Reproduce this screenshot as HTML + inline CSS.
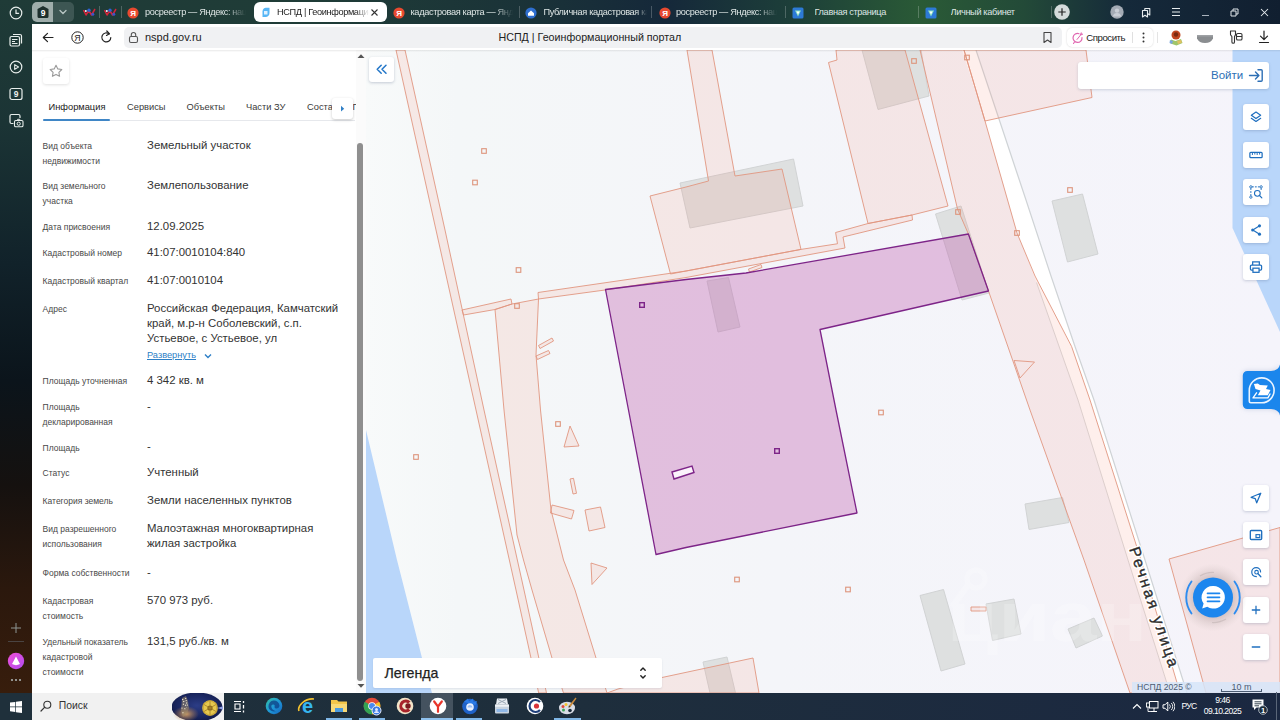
<!DOCTYPE html>
<html lang="ru">
<head>
<meta charset="utf-8">
<title>НСПД | Геоинформационный портал</title>
<style>
*{box-sizing:border-box;margin:0;padding:0}
html,body{width:1280px;height:720px;overflow:hidden;background:#fff;font-family:"Liberation Sans",sans-serif;color:#222}
.abs{position:absolute}
#tabbar{position:absolute;left:0;top:0;width:1280px;height:24px;background:linear-gradient(90deg,#1f3b37 0,#1f3c37 25%,#1a3238 42%,#15283a 52%,#1d3f39 62%,#2a5a36 72%,#234a38 80%,#15293a 88%,#111f30 100%)}
#sidebar{position:absolute;left:0;top:0;width:32px;height:693px;background:linear-gradient(180deg,#1f3b37 0,#1b3435 18%,#11222a 38%,#0b141b 55%,#15110f 70%,#2b180d 85%,#371d0c 100%)}
#addr{position:absolute;left:32px;top:24px;width:1248px;height:26px;background:#fff;border-top-left-radius:7px}
#panel{position:absolute;left:32px;top:50px;width:334px;height:643px;background:#fff;overflow:hidden}
#map{position:absolute;left:366px;top:50px;width:914px;height:643px;background:#f4f5fa;overflow:hidden}
#taskbar{position:absolute;left:0;top:693px;width:1280px;height:27px;background:linear-gradient(90deg,#1f303b 0,#1e2e3c 45%,#1b2841 100%)}
/* tabs */
.tab{position:absolute;top:0;height:24px;line-height:24px;font-size:9.2px;color:#dfe7e6;white-space:nowrap;overflow:hidden;letter-spacing:-0.35px}
.tab.active{background:#fff;color:#222;border-radius:6px;top:2px;height:21px;line-height:21px}
.tsep{position:absolute;top:6px;width:1px;height:12px;background:rgba(255,255,255,.22)}
/* panel */
.lbl{position:absolute;left:10.6px;font-size:8.5px;line-height:15px;color:#484848;white-space:nowrap}
.val{position:absolute;left:115px;font-size:11.4px;line-height:15px;color:#333;white-space:nowrap}
.ptab{position:absolute;top:49.5px;font-size:9.3px;line-height:14px;color:#3a3a3a;white-space:nowrap}
.mbtn{position:absolute;left:877px;width:26px;height:26px;background:#fff;border-radius:3px;box-shadow:0 1px 3px rgba(60,80,120,.25)}
.mbtn svg{position:absolute;left:0;top:0;transform:scale(.9);transform-origin:13px 13px}
</style>
</head>
<body>
<div id="tabbar">
<!-- tab group -->
<div class="abs" style="left:32px;top:2px;width:21px;height:20px;background:#9fadab;border-radius:5px 0 0 5px"></div>
<svg class="abs" style="left:36px;top:5px" width="14" height="14" viewBox="0 0 14 14"><path d="M1.5 4L7 1l5.5 3v7.5a1.5 1.5 0 0 1-1.5 1.5H3a1.5 1.5 0 0 1-1.5-1.5z" fill="#1d2f2d"/><text x="7" y="10.6" font-size="8.5" font-weight="bold" fill="#fff" text-anchor="middle" font-family="Liberation Sans, sans-serif">9</text></svg>
<div class="abs" style="left:53px;top:2px;width:20.5px;height:20px;background:#3d5653;border-radius:0 5px 5px 0"></div>
<svg class="abs" style="left:58px;top:8px" width="10" height="8" viewBox="0 0 10 8"><path d="M2 2.5l3 3 3-3" fill="none" stroke="#b9c6c4" stroke-width="1.3" stroke-linecap="round"/></svg>
<!-- pinned -->
<svg class="abs" style="left:82.5px;top:8px" width="13" height="9" viewBox="0 0 13 9"><path d="M0.5 2l2.5 5 2.8-4.5L8.5 7l3.5-6" fill="none" stroke="#d4243a" stroke-width="1.5" stroke-linejoin="round"/><circle cx="6" cy="2.3" r="1.7" fill="#2f62d3"/><circle cx="9.8" cy="6.3" r="1.5" fill="#3d55c8"/><circle cx="2.8" cy="3" r="1" fill="#f2f4ff"/></svg>
<div class="tsep" style="left:99px"></div>
<svg class="abs" style="left:104px;top:8px" width="13" height="9" viewBox="0 0 13 9"><path d="M0.5 2l2.5 5 2.8-4.5L8.5 7l3.5-6" fill="none" stroke="#d4243a" stroke-width="1.5" stroke-linejoin="round"/><circle cx="6" cy="2.3" r="1.7" fill="#2f62d3"/><circle cx="9.8" cy="6.3" r="1.5" fill="#3d55c8"/><circle cx="2.8" cy="3" r="1" fill="#f2f4ff"/></svg>
<div class="tsep" style="left:120.5px"></div>
<!-- tab 1 -->
<svg class="abs" style="left:127px;top:6.5px" width="12" height="12" viewBox="0 0 12 12"><circle cx="6" cy="6" r="5.6" fill="#e8492f"/><text x="6.2" y="9" font-size="8" font-weight="bold" fill="#fff" text-anchor="middle" font-family="Liberation Sans, sans-serif">Я</text></svg>
<div class="tab" style="left:145px;width:101px;-webkit-mask-image:linear-gradient(90deg,#000 80%,transparent)">росреестр — Яндекс: нашлось</div>
<!-- active tab -->
<div class="tab active" style="left:253.5px;width:133px;height:20px"></div>
<svg class="abs" style="left:261px;top:7px" width="10" height="11" viewBox="0 0 10 11"><path d="M2 2.5a3 3 0 0 1 3-1.8h3.5v5a4 4 0 0 1-4 4.3H1.5V4z" fill="#57b6f5"/><path d="M3 4h3.5v3.5H3z" fill="#dff1ff"/></svg>
<div class="tab" style="left:277px;top:2px;height:21px;line-height:21px;width:92px;color:#222;-webkit-mask-image:linear-gradient(90deg,#000 86%,transparent)">НСПД | Геоинформационный</div>
<svg class="abs" style="left:369.5px;top:8px" width="9" height="9" viewBox="0 0 9 9"><path d="M1.5 1.5l6 6M7.5 1.5l-6 6" stroke="#333" stroke-width="1.1"/></svg>
<!-- tab 3 -->
<svg class="abs" style="left:393px;top:6.5px" width="12" height="12" viewBox="0 0 12 12"><circle cx="6" cy="6" r="5.6" fill="#e8492f"/><text x="6.2" y="9" font-size="8" font-weight="bold" fill="#fff" text-anchor="middle" font-family="Liberation Sans, sans-serif">Я</text></svg>
<div class="tab" style="left:410.5px;width:102px;-webkit-mask-image:linear-gradient(90deg,#000 82%,transparent)">кадастровая карта — Яндекс</div>
<div class="tsep" style="left:518.5px"></div>
<!-- tab 4 -->
<svg class="abs" style="left:525px;top:6.5px" width="12" height="12" viewBox="0 0 12 12"><circle cx="6" cy="6" r="5.6" fill="#2f6fd0"/><path d="M3 6.2L6 3.5l3 2.7v2.6H3z" fill="#fff"/></svg>
<div class="tab" style="left:543.5px;width:103px;-webkit-mask-image:linear-gradient(90deg,#000 90%,transparent)">Публичная кадастровая карта</div>
<div class="tsep" style="left:651px"></div>
<!-- tab 5 -->
<svg class="abs" style="left:658.5px;top:6.5px" width="12" height="12" viewBox="0 0 12 12"><circle cx="6" cy="6" r="5.6" fill="#e8492f"/><text x="6.2" y="9" font-size="8" font-weight="bold" fill="#fff" text-anchor="middle" font-family="Liberation Sans, sans-serif">Я</text></svg>
<div class="tab" style="left:676px;width:101px;-webkit-mask-image:linear-gradient(90deg,#000 80%,transparent)">росреестр — Яндекс: нашлось</div>
<div class="tsep" style="left:784.5px"></div>
<!-- tab 6 -->
<svg class="abs" style="left:791.5px;top:6.5px" width="12" height="12" viewBox="0 0 12 12"><rect x="0.5" y="0.5" width="11" height="11" rx="1.5" fill="#2d7ad6"/><path d="M3 3.5h6L6 9.5z" fill="#8fe3c0"/><path d="M4.5 4.5h3L6 7.5z" fill="#fff"/></svg>
<div class="tab" style="left:814.5px;width:100px">Главная страница</div>
<div class="tsep" style="left:917.5px"></div>
<!-- tab 7 -->
<svg class="abs" style="left:924.5px;top:6.5px" width="12" height="12" viewBox="0 0 12 12"><rect x="0.5" y="0.5" width="11" height="11" rx="1.5" fill="#2d7ad6"/><path d="M3 3.5h6L6 9.5z" fill="#8fe3c0"/><path d="M4.5 4.5h3L6 7.5z" fill="#fff"/></svg>
<div class="tab" style="left:950.5px;width:90px">Личный кабинет</div>
<div class="tsep" style="left:1050.5px"></div>
<!-- new tab -->
<svg class="abs" style="left:1054px;top:4px" width="16" height="16" viewBox="0 0 16 16"><circle cx="8" cy="8" r="7.8" fill="#d5dbdb"/><path d="M8 4.3v7.4M4.3 8h7.4" stroke="#222" stroke-width="1.2"/></svg>
<!-- profile -->
<svg class="abs" style="left:1110px;top:5px" width="14" height="14" viewBox="0 0 14 14"><circle cx="7" cy="7" r="6.7" fill="#a4abb5"/><circle cx="7" cy="5.6" r="2.2" fill="#c9ced6"/><path d="M2.8 11.5a4.3 4.3 0 0 1 8.4 0z" fill="#c9ced6"/></svg>
<svg class="abs" style="left:1141px;top:7px" width="11" height="11" viewBox="0 0 11 11"><path d="M1.5 3.5h5v6.5L4 8.3 1.5 10z" fill="none" stroke="#e6ebee" stroke-width="1.1" stroke-linejoin="round"/><path d="M3.8 3.3V1.5h5V8L7 6.8" fill="none" stroke="#e6ebee" stroke-width="1.1" stroke-linejoin="round"/></svg>
<svg class="abs" style="left:1171px;top:7px" width="10" height="10" viewBox="0 0 10 10"><path d="M1 1.5h8M1 5h8M1 8.5h8" stroke="#e6ebee" stroke-width="1.1"/></svg>
<div class="abs" style="left:1202px;top:14.5px;width:6.5px;height:1px;background:#aab3bd"></div>
<svg class="abs" style="left:1230px;top:8px" width="9" height="9" viewBox="0 0 9 9"><path d="M1 3h5v5H1z" fill="none" stroke="#dfe5ea" stroke-width="1"/><path d="M3 3V1h5v5H6" fill="none" stroke="#dfe5ea" stroke-width="1"/></svg>
<svg class="abs" style="left:1260px;top:8px" width="9" height="9" viewBox="0 0 9 9"><path d="M1 1l7 7M8 1L1 8" stroke="#e6ebee" stroke-width="1.05"/></svg>
</div>
<div id="sidebar">
<svg class="abs" style="left:9px;top:6px" width="14" height="14" viewBox="0 0 14 14"><circle cx="7" cy="7" r="5.8" fill="none" stroke="#e8eeec" stroke-width="1.2"/><path d="M7 3.8V7.3h2.6" fill="none" stroke="#e8eeec" stroke-width="1.2" stroke-linecap="round"/></svg>
<svg class="abs" style="left:9px;top:33px" width="14" height="14" viewBox="0 0 14 14"><rect x="1" y="3.5" width="9.5" height="9.5" rx="1.5" fill="none" stroke="#e8eeec" stroke-width="1.2"/><path d="M4 1.5h7a1.5 1.5 0 0 1 1.5 1.5v7.5" fill="none" stroke="#e8eeec" stroke-width="1.2"/><path d="M3 6.5h5.5M3 8.5h3M3 10.5h5.5" stroke="#e8eeec" stroke-width="1"/></svg>
<svg class="abs" style="left:9px;top:60px" width="14" height="14" viewBox="0 0 14 14"><circle cx="7" cy="7" r="5.8" fill="none" stroke="#e8eeec" stroke-width="1.2"/><path d="M5.7 4.6l3.8 2.4-3.8 2.4z" fill="none" stroke="#e8eeec" stroke-width="1.1" stroke-linejoin="round"/></svg>
<svg class="abs" style="left:9px;top:87px" width="14" height="14" viewBox="0 0 14 14"><rect x="1" y="1.5" width="12" height="11" rx="2" fill="none" stroke="#e8eeec" stroke-width="1.2"/><text x="7" y="10.3" font-size="8.5" font-weight="bold" fill="#e8eeec" text-anchor="middle" font-family="Liberation Sans, sans-serif">9</text></svg>
<svg class="abs" style="left:9px;top:113px" width="15" height="15" viewBox="0 0 15 15"><path d="M4.5 10.5H2.5a1.5 1.5 0 0 1-1.5-1.5V3a1.5 1.5 0 0 1 1.5-1.5h7A1.5 1.5 0 0 1 11 3v2" fill="none" stroke="#e8eeec" stroke-width="1.2"/><rect x="5.5" y="7.5" width="8.5" height="6.3" rx="1.3" fill="none" stroke="#e8eeec" stroke-width="1.1"/><circle cx="9.7" cy="10.7" r="1.6" fill="none" stroke="#e8eeec" stroke-width="1"/><path d="M8 7.5l.7-1.2h2l.7 1.2" fill="none" stroke="#e8eeec" stroke-width="1"/></svg>
<!-- bottom -->
<svg class="abs" style="left:10px;top:622px" width="12" height="12" viewBox="0 0 12 12"><path d="M6 1v10M1 6h10" stroke="#8e9694" stroke-width="1"/></svg>
<div class="abs" style="left:8px;top:641px;width:16px;height:1px;background:#4a4442"></div>
<svg class="abs" style="left:7px;top:652px" width="18" height="18" viewBox="0 0 18 18"><defs><linearGradient id="alg" x1="0" y1="0" x2="1" y2="1"><stop offset="0" stop-color="#f04fd8"/><stop offset="1" stop-color="#b04cf0"/></linearGradient></defs><circle cx="9" cy="9" r="8.2" fill="url(#alg)"/><path d="M9 4.5l4 7.5a8 8 0 0 1-8 0z" fill="#fff"/></svg>
<svg class="abs" style="left:10px;top:678px" width="12" height="4" viewBox="0 0 12 4"><circle cx="2" cy="2" r="1.1" fill="#aab0ae"/><circle cx="6" cy="2" r="1.1" fill="#aab0ae"/><circle cx="10" cy="2" r="1.1" fill="#aab0ae"/></svg>
</div>
<div id="addr">
<svg class="abs" style="left:10px;top:8px" width="12" height="11" viewBox="0 0 12 11"><path d="M11 5.5H1.5M5.5 1.3L1.3 5.5l4.2 4.2" fill="none" stroke="#222" stroke-width="1.2" stroke-linecap="round" stroke-linejoin="round"/></svg>
<svg class="abs" style="left:38.5px;top:7px" width="13" height="13" viewBox="0 0 13 13"><circle cx="6.5" cy="6.5" r="5.7" fill="none" stroke="#222" stroke-width="1"/><text x="6.5" y="9.6" font-size="8.8" fill="#222" text-anchor="middle" font-family="Liberation Sans, sans-serif">Я</text></svg>
<svg class="abs" style="left:68px;top:6px" width="13" height="14" viewBox="0 0 13 14"><path d="M10.8 7.5a4.5 4.5 0 1 1-1.7-3.6" fill="none" stroke="#222" stroke-width="1.2" stroke-linecap="round"/><path d="M6.8 1l2.6 2.7-2.9 1.7" fill="none" stroke="#222" stroke-width="1.2" stroke-linecap="round" stroke-linejoin="round"/></svg>
<div class="abs" style="left:91.5px;top:3px;width:938.5px;height:21px;background:#f0f1f3;border-radius:5px"></div>
<svg class="abs" style="left:96px;top:7px" width="11" height="13" viewBox="0 0 11 13"><rect x="1.5" y="5.5" width="8" height="6" rx="1.5" fill="none" stroke="#555" stroke-width="1.1"/><path d="M3.3 5.5V3.7a2.2 2.2 0 0 1 4.4 0v1.8" fill="none" stroke="#555" stroke-width="1.1"/></svg>
<div class="abs" style="left:113px;top:6px;font-size:11px;line-height:14px;color:#222;white-space:nowrap">nspd.gov.ru</div>
<div class="abs" style="left:466.5px;top:6px;font-size:10.7px;line-height:14px;color:#222;white-space:nowrap">НСПД | Геоинформационный портал</div>
<svg class="abs" style="left:1010px;top:7px" width="11" height="13" viewBox="0 0 11 13"><path d="M2 1.5h7v10L5.5 9 2 11.5z" fill="none" stroke="#444" stroke-width="1.1" stroke-linejoin="round"/></svg>
<div class="abs" style="left:1034.5px;top:4px;width:86.5px;height:19px;background:#fff;border-radius:5px;box-shadow:0 0 2px rgba(0,0,0,.18)"></div>
<svg class="abs" style="left:1040px;top:7.5px" width="12" height="12" viewBox="0 0 12 12"><path d="M10 5.5a4.5 4.5 0 1 1-3-3.8" fill="none" stroke="#e066b0" stroke-width="1.2" stroke-linecap="round"/><path d="M5 7.5l4-5M9.5 1l1 1.5-1.8.3z" fill="none" stroke="#e066b0" stroke-width="1" stroke-linecap="round"/><path d="M2.5 10l-1 1.5" stroke="#e066b0" stroke-width="1.1" stroke-linecap="round"/></svg>
<div class="abs" style="left:1054.3px;top:6.5px;font-size:9.6px;line-height:13px;color:#222;white-space:nowrap;letter-spacing:-0.45px">Спросить</div>
<div class="abs" style="left:1100px;top:8px;width:1px;height:11px;background:#e0e0e0"></div>
<svg class="abs" style="left:1109.5px;top:8px" width="3" height="11" viewBox="0 0 3 11"><circle cx="1.5" cy="1.5" r="1" fill="#333"/><circle cx="1.5" cy="5.5" r="1" fill="#333"/><circle cx="1.5" cy="9.5" r="1" fill="#333"/></svg>
<div class="abs" style="left:1124.5px;top:8px;width:1px;height:11px;background:#e4e4e4"></div>
<svg class="abs" style="left:1136px;top:5px" width="17" height="17" viewBox="0 0 17 17"><circle cx="8" cy="6" r="4.5" fill="#c0451f"/><circle cx="8" cy="5.5" r="2.2" fill="#7a2a10"/><path d="M3 10.5l4.5 1.5L13 10l1.5 4-6 2.5-6-2z" fill="#9fc56a"/><path d="M2 11l3 1-1 3-2.5-1z" fill="#7aa6e0"/><path d="M9 12l4-1 1 2.5-4 1.5z" fill="#e0c060"/></svg>
<svg class="abs" style="left:1164px;top:10px" width="18" height="10" viewBox="0 0 18 10"><path d="M1 1h16v3.5c-1.5 3-4 4.5-8 4.5S2.5 7.5 1 4.5z" fill="#8a8d90"/><path d="M1 1h16v1.5H1z" fill="#9ea1a4"/></svg>
<svg class="abs" style="left:1196px;top:5px" width="16" height="16" viewBox="0 0 16 16"><path d="M2.5 2h5v3.5c0 1-1 1.2-1 2.2V13a1.3 1.3 0 0 1-2.6 0V7.7c0-1-1.4-1.2-1.4-2.2z" fill="none" stroke="#333" stroke-width="1.1" stroke-linejoin="round"/><rect x="8.5" y="4.5" width="5.5" height="6.5" rx="1.3" fill="none" stroke="#333" stroke-width="1.1"/><path d="M8.5 7.5h5.5" stroke="#333" stroke-width="1"/></svg>
<svg class="abs" style="left:1226px;top:6px" width="12" height="14" viewBox="0 0 12 14"><path d="M6 1v8.5M2.5 6.2L6 9.7l3.5-3.5M1.5 12.5h9" fill="none" stroke="#222" stroke-width="1.2" stroke-linecap="round" stroke-linejoin="round"/></svg>
</div>

<div id="panel">
<div class="abs" style="left:11px;top:8px;width:26px;height:26px;border-radius:3px;box-shadow:0 1px 3px rgba(0,0,0,.12);background:#fff">
<svg width="26" height="26" viewBox="0 0 26 26"><path d="M13 7.2l1.8 3.7 4 .6-2.9 2.8.7 4-3.6-1.9-3.6 1.9.7-4-2.9-2.8 4-.6z" fill="none" stroke="#9a9a9a" stroke-width="1.1" stroke-linejoin="round"/></svg></div>
<div class="ptab" style="left:16.5px;color:#222">Информация</div>
<div class="ptab" style="left:95px">Сервисы</div>
<div class="ptab" style="left:154.5px">Объекты</div>
<div class="ptab" style="left:214px">Части ЗУ</div>
<div class="ptab" style="left:275px">Состав</div>
<div class="ptab" style="left:320.5px">Г</div>
<div class="abs" style="left:11px;top:70px;width:312px;height:1px;background:#e6e8ec"></div>
<div class="abs" style="left:11px;top:69px;width:67px;height:2px;background:#3f86c6;border-radius:1px"></div>
<div class="abs" style="left:300px;top:48px;width:21px;height:21px;background:#fff;border-radius:3px;box-shadow:0 1px 3px rgba(0,0,0,.22)"><svg width="21" height="21" viewBox="0 0 21 21"><path d="M9 7.8l3.2 2.9L9 13.6z" fill="#2f7fc6"/></svg></div>

<div class="abs" style="left:0;top:0.7px;width:324px;height:640px">
<div class="lbl" style="top:88px">Вид объекта<br>недвижимости</div><div class="val" style="top:87px">Земельный участок</div>
<div class="lbl" style="top:128px">Вид земельного<br>участка</div><div class="val" style="top:127px">Землепользование</div>
<div class="lbl" style="top:169px">Дата присвоения</div><div class="val" style="top:168px">12.09.2025</div>
<div class="lbl" style="top:195px">Кадастровый номер</div><div class="val" style="top:194px">41:07:0010104:840</div>
<div class="lbl" style="top:223px">Кадастровый квартал</div><div class="val" style="top:222px">41:07:0010104</div>
<div class="lbl" style="top:251px">Адрес</div><div class="val" style="top:250px">Российская Федерация, Камчатский<br>край, м.р-н Соболевский, с.п.<br>Устьевое, с Устьевое, ул</div>
<div class="abs" style="left:115px;top:297px;font-size:9.25px;line-height:15px;color:#2d7fc6;text-decoration:underline;white-space:nowrap">Развернуть</div>
<svg class="abs" style="left:171px;top:300px" width="10" height="10" viewBox="0 0 10 10"><path d="M2 3.5l3 3 3-3" fill="none" stroke="#2d7fc6" stroke-width="1.4"/></svg>
<div class="lbl" style="top:323px">Площадь уточненная</div><div class="val" style="top:322px">4 342 кв. м</div>
<div class="lbl" style="top:349px">Площадь<br>декларированная</div><div class="val" style="top:348px">-</div>
<div class="lbl" style="top:390px">Площадь</div><div class="val" style="top:388px">-</div>
<div class="lbl" style="top:415px">Статус</div><div class="val" style="top:414px">Учтенный</div>
<div class="lbl" style="top:443px">Категория земель</div><div class="val" style="top:442px">Земли населенных пунктов</div>
<div class="lbl" style="top:471px">Вид разрешенного<br>использования</div><div class="val" style="top:470px">Малоэтажная многоквартирная<br>жилая застройка</div>
<div class="lbl" style="top:515px">Форма собственности</div><div class="val" style="top:514px">-</div>
<div class="lbl" style="top:543px">Кадастровая<br>стоимость</div><div class="val" style="top:542px">570 973 руб.</div>
<div class="lbl" style="top:584px">Удельный показатель<br>кадастровой<br>стоимости</div><div class="val" style="top:583px">131,5 руб./кв. м</div>
</div>
<!-- scrollbar -->
<div class="abs" style="left:324px;top:0;width:10px;height:642px;background:#fbfbfb"></div>
<svg class="abs" style="left:325px;top:3px" width="8" height="6" viewBox="0 0 8 6"><path d="M0.5 5L4 1.2 7.5 5z" fill="#555"/></svg>
<div class="abs" style="left:325px;top:93px;width:6px;height:538px;background:#8f8f8f;border-radius:3px"></div>
<svg class="abs" style="left:325px;top:633px" width="8" height="6" viewBox="0 0 8 6"><path d="M0.5 1L4 4.8 7.5 1z" fill="#555"/></svg>
</div>

<div id="map">
<svg id="mapsvg" width="914" height="643" viewBox="366 50 914 643" style="position:absolute;left:0;top:0">
<defs>
<linearGradient id="bgg" x1="0" x2="1" y1="0" y2="0"><stop offset="0" stop-color="#f8fafa"/><stop offset="0.1" stop-color="#f4f7f8"/><stop offset="0.45" stop-color="#f4f5f9"/><stop offset="1" stop-color="#f5f4fb"/></linearGradient>
</defs>
<rect x="366" y="50" width="914" height="643" fill="url(#bgg)"/>
<!-- water -->
<polygon points="366,430 397,560 422,658 432,693 366,693" fill="#b9d6fa"/>
<polygon points="1232.5,50 1232.5,228 1280,332 1280,50" fill="#b9d6fa"/>
<!-- base road shoulder (white) with gray edges -->
<polygon points="962,50 985,121 1017,232 1036.5,282.5 1078,400 1128,560 1170,693 1187,693 1145,560 1094,400 1075,346.5 1051,276 1026,200 999,119 976,50" fill="#ffffff"/>
<polyline points="1036.5,282.5 1078,400 1128,560 1170,693" fill="none" stroke="#d9dadb" stroke-width="1"/>
<polyline points="976,50 999,119 1026,200 1051,276 1075,346.5 1094,400 1145,560 1187,693" fill="none" stroke="#cfd3d6" stroke-width="1.2"/>
<!-- gray buildings -->
<g fill="#dee0e0" stroke="#d1d3d4" stroke-width="1">
<polygon points="680,183 793.5,159 803,206 690,228"/>
<polygon points="862,50 921,50 929,96 878,109.5"/>
<polygon points="707,281 728.5,277.5 740,327 718,332"/>
<polygon points="935.5,214 961,206 989,293 962,300"/>
<polygon points="1052,201 1082.5,194 1098,254 1067.5,262"/>
<polygon points="1025,504 1062.5,497.5 1069,522.5 1029,529.5"/>
<polygon points="920,595.5 943.5,589.5 965,664 941,671"/>
<polygon points="986,604 1014,599 1021,634 992.5,640.5"/>
<polygon points="1068,629 1094,618 1102.5,636 1076,648"/>
<polygon points="703,662 727,657 735.5,693 710,693"/>
</g>
<!-- cadastral parcels -->
<g fill="rgba(243,125,98,0.12)" stroke="#e19680" stroke-width="0.9" stroke-linejoin="round">
<polygon points="396,50 436,230 476,410 516,590 538.7,693 546.5,693 524,590 484,410 445,230 405,50"/>
<polygon points="462,310 511,299 512,304 495,309.5 463.5,315"/>
<polygon points="495,309.5 512,304 538.5,299 536,355 540.5,410 551,510 563.5,560 575,590 596,658 607,693 563.5,693 552,658 532,590 523.5,560 517,535 504,410"/>
<polygon points="538,292.5 686,271 801,249.4 837.5,243.75 835.6,232.5 868,223.5 912,215 912.5,220 843,237 845,248 686,277.5 605,290 538.5,299"/>
<polygon points="650,196 686,187 708.5,181 687,50 712,50 735,176 782,169 801,249.4 686,271 670.5,274"/>
<polygon points="836,50 837,60 828.5,62.5 868,223.5 912,215 948,206 905,50"/>
<polygon points="920,50 957.5,209 968.4,234 988.5,291 1030,410 1084,560 1130,693 1180,693 1141,560 1090,400 1071.6,346.5 1035,276 1017,233 985,121 964,50"/>
<polygon points="964,50 985,121 1092,97.5 1086,50"/>
<polygon points="1169,559 1280,527.5 1280,693 1206,693"/>
<polygon points="607,693 618,689 662,677.5 753,658 759,693"/>
<polygon points="570,426 564,447 579,446"/>
<polygon points="591,563 607,568 592,584.5"/>
<polygon points="570,479 573.5,478.3 576.5,493.3 573,494"/>
<polygon points="552,505 574,510.5 571.5,519 550.5,513"/>
<polygon points="585,510 600.5,507 605,527.5 589,531"/>
<polygon points="538.5,345.5 552,338 553.5,341 540,348.5"/>
<polygon points="536,356 548.5,350.5 550,353.5 537.5,359.5"/>
<polygon points="748.5,269 761,264.5 762,267.5 749.5,272"/>
<polygon points="971,607 986,607 986,611 971,611"/>
</g>
<polygon points="1014,360.5 1034.5,362 1020,378" fill="none" stroke="#e19680" stroke-width="0.9"/>
<g fill="none" stroke="#dd957c" stroke-width="1.1">
<rect x="481.7" y="148.7" width="4.6" height="4.6"/><rect x="472.7" y="180.2" width="4.6" height="4.6"/><rect x="516.2" y="267.7" width="4.6" height="4.6"/><rect x="514.7" y="303.7" width="4.6" height="4.6"/>
<rect x="911.7" y="58.7" width="4.6" height="4.6"/><rect x="964.7" y="55.2" width="4.6" height="4.6"/><rect x="955.7" y="209.7" width="4.6" height="4.6"/><rect x="1067.7" y="187.7" width="4.6" height="4.6"/><rect x="1014.7" y="230.7" width="4.6" height="4.6"/>
<rect x="555.7" y="421.7" width="4.6" height="4.6"/><rect x="413.7" y="454.7" width="4.6" height="4.6"/><rect x="878.7" y="410.2" width="4.6" height="4.6"/><rect x="734.7" y="577.2" width="4.6" height="4.6"/><rect x="845.7" y="587.2" width="4.6" height="4.6"/>
</g>
<!-- selected parcel -->
<polygon points="605.5,289.5 686,279.5 746,273 968.4,234 988.5,291 820,329.5 836,410 857,513 686,547.5 656,554.5 628.5,410" fill="rgba(190,95,175,0.36)" stroke="#7d2488" stroke-width="1.3" stroke-linejoin="round"/>
<polygon points="672,472 692,466 694,472.5 674,479" fill="#fbf3fb" stroke="#7d2488" stroke-width="1.4"/>
<rect x="639.7" y="302.7" width="4.6" height="4.6" fill="none" stroke="#7d2488" stroke-width="1.4"/>
<rect x="774.7" y="448.7" width="4.6" height="4.6" fill="none" stroke="#7d2488" stroke-width="1.4"/>
<g opacity="0.2" fill="#ffffff"><text x="947" y="641" font-family="Liberation Sans, sans-serif" font-size="70" font-weight="bold" textLength="200" lengthAdjust="spacingAndGlyphs">циан</text><circle cx="976" cy="579" r="9" fill="none" stroke="#ffffff" stroke-width="5"/><path d="M968 585l-16 22" stroke="#ffffff" stroke-width="6" fill="none"/></g>
<!-- street label -->
<g transform="translate(1129,549) rotate(71.4)" font-family="Liberation Sans, sans-serif" font-size="15.5">
<text x="0" y="0" fill="#fff" stroke="#ffffff" stroke-width="3.2" stroke-linejoin="round" textLength="125.5" lengthAdjust="spacing">Речная улица</text>
<text x="0" y="0" fill="#2b2b2b" stroke="#2b2b2b" stroke-width="0.35" textLength="125.5" lengthAdjust="spacing">Речная улица</text>
</g>

</svg>

<!-- collapse -->
<div class="abs" style="left:2.5px;top:7px;width:25.5px;height:25px;background:#fff;border-radius:3px;box-shadow:0 1px 3px rgba(60,80,120,.28)"><svg width="26" height="25" viewBox="0 0 26 25"><path d="M12.2 8.2L8.2 12.2l4 4M17 8.2l-4 4 4 4" fill="none" stroke="#2276c8" stroke-width="1.5" stroke-linecap="round" stroke-linejoin="round"/></svg></div>
<!-- login -->
<div class="abs" style="left:711.5px;top:11.5px;width:191.5px;height:27px;background:#fff;border-radius:3px;box-shadow:0 1px 3px rgba(60,80,120,.22)">
<div class="abs" style="left:133.5px;top:6px;font-size:11.5px;line-height:14px;color:#2d6fb5;white-space:nowrap">Войти</div>
<svg class="abs" style="left:170px;top:5px" width="17" height="17" viewBox="0 0 17 17"><path d="M1.5 8.5h9M7.5 5l3.4 3.5L7.5 12M10 2.8h3.2a1 1 0 0 1 1 1v9.4a1 1 0 0 1-1 1H10" fill="none" stroke="#2d6fb5" stroke-width="1.4" stroke-linecap="round" stroke-linejoin="round"/></svg>
</div>
<!-- right tool buttons -->
<div class="mbtn" style="top:54.3px"><svg width="26" height="26" viewBox="0 0 26 26"><path d="M13 7.5l5.2 3.6L13 14.7 7.8 11.1z" fill="none" stroke="#1f6fbf" stroke-width="1.3" stroke-linejoin="round"/><path d="M7.8 14.4L13 18l5.2-3.6" fill="none" stroke="#1f6fbf" stroke-width="1.3" stroke-linejoin="round" stroke-linecap="round"/></svg></div>
<div class="mbtn" style="top:91.7px"><svg width="26" height="26" viewBox="0 0 26 26"><rect x="6.2" y="10" width="13.6" height="6" rx="1" fill="none" stroke="#1f6fbf" stroke-width="1.4"/><path d="M9 10.5v2.5M11.7 10.5v2M14.3 10.5v2.5M17 10.5v2" stroke="#1f6fbf" stroke-width="1.1"/></svg></div>
<div class="mbtn" style="top:129px"><svg width="26" height="26" viewBox="0 0 26 26"><path d="M8.5 7.3h8.8M7.3 8.7v8.6M18.7 8.7v2" fill="none" stroke="#1f6fbf" stroke-width="1.1" stroke-dasharray="2 1.3"/><circle cx="7.3" cy="7.3" r="1.3" fill="none" stroke="#1f6fbf" stroke-width="1"/><circle cx="18.7" cy="7.3" r="1.3" fill="none" stroke="#1f6fbf" stroke-width="1"/><circle cx="7.3" cy="18.7" r="1.3" fill="none" stroke="#1f6fbf" stroke-width="1"/><circle cx="14.5" cy="14.5" r="3.2" fill="none" stroke="#1f6fbf" stroke-width="1.2"/><path d="M16.9 16.9l2.6 2.6" stroke="#1f6fbf" stroke-width="1.3" stroke-linecap="round"/></svg></div>
<div class="mbtn" style="top:166.7px"><svg width="26" height="26" viewBox="0 0 26 26"><path d="M16.5 8.6l-7 4.4 7 4.4" fill="none" stroke="#1f6fbf" stroke-width="1.3"/><circle cx="16.9" cy="8.4" r="1.7" fill="#1f6fbf"/><circle cx="9.3" cy="13" r="1.7" fill="#1f6fbf"/><circle cx="16.9" cy="17.6" r="1.7" fill="#1f6fbf"/></svg></div>
<div class="mbtn" style="top:204px"><svg width="26" height="26" viewBox="0 0 26 26"><path d="M9.3 10.8V7.3h7.4v3.5" fill="none" stroke="#1f6fbf" stroke-width="1.4"/><rect x="6.8" y="10.8" width="12.4" height="5.6" rx="1.2" fill="none" stroke="#1f6fbf" stroke-width="1.4"/><rect x="9.6" y="14.3" width="6.8" height="4.6" fill="#fff" stroke="#1f6fbf" stroke-width="1.4"/></svg></div>
<!-- bottom tool buttons -->
<div class="mbtn" style="top:435px"><svg width="26" height="26" viewBox="0 0 26 26"><path d="M18.3 7.7L7.6 12.2l4.6 1.6 1.6 4.6z" fill="none" stroke="#1f6fbf" stroke-width="1.4" stroke-linejoin="round"/></svg></div>
<div class="mbtn" style="top:472px"><svg width="26" height="26" viewBox="0 0 26 26"><rect x="6.7" y="8" width="12.6" height="10" rx="1" fill="none" stroke="#1f6fbf" stroke-width="1.5"/><rect x="13" y="12.6" width="4.2" height="3.2" fill="none" stroke="#1f6fbf" stroke-width="1.3"/></svg></div>
<div class="mbtn" style="top:509px"><svg width="26" height="26" viewBox="0 0 26 26"><path d="M13.4 18.2c-3.2-.3-5.1-2.5-5.1-5.2a4.9 4.9 0 0 1 9.8 0" fill="none" stroke="#1f6fbf" stroke-width="1.3" stroke-linecap="round"/><circle cx="13.6" cy="13.2" r="2" fill="none" stroke="#1f6fbf" stroke-width="1.2"/><path d="M15 14.7l3.4 3.6" stroke="#1f6fbf" stroke-width="1.4" stroke-linecap="round"/></svg></div>
<div class="mbtn" style="top:546.5px"><svg width="26" height="26" viewBox="0 0 26 26"><path d="M13 8.3v9.4M8.3 13h9.4" stroke="#1f6fbf" stroke-width="1.4"/></svg></div>
<div class="mbtn" style="top:584px"><svg width="26" height="26" viewBox="0 0 26 26"><path d="M8.3 13h9.4" stroke="#1f6fbf" stroke-width="1.4"/></svg></div>
<!-- blue badge -->
<svg class="abs" style="left:874px;top:312px;filter:drop-shadow(0 0 2.5px rgba(120,140,180,.35))" width="40" height="56" viewBox="0 0 40 56"><path d="M2.8,13.5 a4.5,4.5 0 0 1 4.5,-4.5 H31 Q38.5,9.0 40.0,2.5 V53.5 Q38.5,47.0 31.0,47.0 H7.2999999999999545 a4.5,4.5 0 0 1 -4.5,-4.5 Z" fill="#1b86ec"/><path d="M9.3,28.3 A12.4,12.4 0 1 1 21.7,40.7 H10.8 Q9.3,40.7 9.3,39.2 Z" fill="none" stroke="#eaf4ff" stroke-width="1.6" stroke-linejoin="round"/><path d="M13.9,22.1 L17.8,21.5 L20.0,23.0 L27.8,23.5 L26.0,27.0 L30.5,28.0 L27.8,33.3 L17.8,33.3 L20.5,28.5 L15.5,27.0 Z" fill="#fff"/><path d="M16.9,30.4 L13.0,35.9 H27.9 L30.3,31.5" fill="none" stroke="#fff" stroke-width="1.3" stroke-linejoin="round"/></svg>
<!-- chat -->
<svg class="abs" style="left:812px;top:512px" width="70" height="70" viewBox="0 0 70 70">
<defs><radialGradient id="halo"><stop offset="0.55" stop-color="#c2b0b0" stop-opacity=".7"/><stop offset="1" stop-color="#d8cccc" stop-opacity="0"/></radialGradient></defs>
<circle cx="35" cy="35.5" r="34" fill="url(#halo)"/>
<path d="M13.5 19.5a27 27 0 0 0 0 32M56.5 19.5a27 27 0 0 1 0 32" fill="none" stroke="#2d8cf0" stroke-width="1.9" stroke-linecap="round"/>
<path d="M22 14a25 25 0 0 1 14-3.5M48 57a25 25 0 0 1-14 3.5" fill="none" stroke="#c9bcbc" stroke-width="1.2" opacity=".8"/>
<circle cx="35" cy="35.5" r="20" fill="#1c86ee"/>
<path d="M35.5 24a11.3 11.3 0 1 1-6.2 20.7l-5.1 1.9 1.4-5a11.3 11.3 0 0 1 9.9-17.6z" fill="#fff"/>
<path d="M29.5 31.3h12M29.5 35.3h12M29.5 39.3h12" stroke="#1c86ee" stroke-width="1.7" stroke-linecap="round"/>
</svg>
<!-- legend -->
<div class="abs" style="left:7px;top:608px;width:289px;height:29.5px;background:#fff;border-radius:2px;box-shadow:0 1px 2px rgba(60,80,120,.12)">
<div class="abs" style="left:11.5px;top:6.5px;font-size:14.2px;line-height:17px;color:#222;white-space:nowrap;-webkit-text-stroke:0.25px #222">Легенда</div>
<svg class="abs" style="left:264px;top:7px" width="12" height="16" viewBox="0 0 12 16"><path d="M3.8 5.3L6 3l2.2 2.3M3.8 10.7L6 13l2.2-2.3" fill="none" stroke="#222" stroke-width="1.4" stroke-linecap="round" stroke-linejoin="round"/></svg>
</div>
<!-- attribution -->
<div class="abs" style="left:766px;top:632px;width:148px;height:11px;background:rgba(214,229,248,.85)"></div>
<div class="abs" style="left:771px;top:632px;font-size:8.6px;line-height:11px;color:#4b5b72;white-space:nowrap">НСПД 2025 ©</div>
<div class="abs" style="left:855px;top:638.5px;width:41px;height:3px;border:1px solid #4b5b72;border-top:none"></div>
<div class="abs" style="left:855px;top:631.5px;width:41px;text-align:center;font-size:9px;line-height:11px;color:#4b5b72">10 m</div>

</div>
<div id="taskbar">
<div class="abs" style="left:0;top:-1px;width:1280px;height:28px">
<svg class="abs" style="left:10px;top:9px" width="12" height="12" viewBox="0 0 12 12"><path d="M0 1.6L5.3.9v4.7H0zM6 .8L12 0v5.6H6zM0 6.3h5.3V11L0 10.3zM6 6.3h6V12l-6-.8z" fill="#fff"/></svg>
<div class="abs" style="left:32px;top:1px;width:192px;height:27px;background:#f1f1f1"></div>
<svg class="abs" style="left:40px;top:8px" width="12" height="12" viewBox="0 0 12 12"><circle cx="7.3" cy="4.7" r="3.5" fill="none" stroke="#333" stroke-width="1.1"/><path d="M4.8 7.2L1 11" stroke="#333" stroke-width="1.2" stroke-linecap="round"/></svg>
<div class="abs" style="left:58.8px;top:7px;font-size:10.4px;line-height:14px;color:#333;white-space:nowrap">Поиск</div>
<svg class="abs" style="left:172px;top:1px" width="52" height="27" viewBox="0 0 52 27"><defs><radialGradient id="jw" cx="0.5" cy="0.45" r="0.7"><stop offset="0" stop-color="#2c3d86"/><stop offset="0.6" stop-color="#18245c"/><stop offset="1" stop-color="#0c1233"/></radialGradient><radialGradient id="jw2" cx="0.5" cy="0.5" r="0.5"><stop offset="0" stop-color="#e2a866" stop-opacity=".9"/><stop offset="1" stop-color="#c98a4a" stop-opacity="0"/></radialGradient></defs><ellipse cx="25" cy="14" rx="25.5" ry="14.5" fill="url(#jw)"/><ellipse cx="14" cy="21" rx="13" ry="8" fill="url(#jw2)"/><path d="M10 5l4-2 2 5 1 7-2 6-4 3-2-6z" fill="#9c8a6a" opacity=".55"/><path d="M10.5 6l1.5 3M13.5 5l1 4M11 11l3 1.5M12.5 16l2-1.5M10.5 20l2-1M14.5 9.5l1 3M9.5 15l2 .5" stroke="#f6efd6" stroke-width="1.2" stroke-dasharray="1 1.3"/><circle cx="38" cy="15" r="7.8" fill="#e0bf45"/><path d="M38 7.2l6.7 3.9v7.8L38 22.8l-6.7-3.9v-7.8z" fill="#e6c84e" stroke="#b8922a" stroke-width=".6"/><circle cx="38" cy="15" r="2.6" fill="#7a5c18"/><path d="M38 7.2v15.6M31.3 11.1l13.4 7.8M31.3 18.9l13.4-7.8" stroke="#a8842a" stroke-width=".9"/><path d="M45.5 15l5.5-1.8v3.6z" fill="#8f9fe0"/></svg>
<!-- task view -->
<svg class="abs" style="left:233px;top:8px" width="13" height="13" viewBox="0 0 13 13"><path d="M1 1.5h7M1 11.5h7M2 4h5v5H2z" fill="none" stroke="#fff" stroke-width="1.1"/><path d="M10.5 1v2M10.5 5v3.5M10.5 10.5v2" stroke="#fff" stroke-width="1.3"/></svg>
<!-- edge -->
<svg class="abs" style="left:265px;top:5px" width="18" height="18" viewBox="0 0 18 18"><defs><linearGradient id="edg" x1="0" y1="0" x2="1" y2="1"><stop offset="0" stop-color="#35c1a0"/><stop offset="0.5" stop-color="#1f9ad8"/><stop offset="1" stop-color="#1563c0"/></linearGradient></defs><circle cx="9" cy="9" r="8.3" fill="url(#edg)"/><path d="M3.5 9.5a5.5 5.5 0 0 1 11-1c0 2-1.5 3-3 3-1.2 0-2-.6-2-1.5 0-.5.3-.8.3-1.3a1.8 1.8 0 0 0-3.5.3c0 2.5 2 5 5 5-4 1.5-7.8-1-7.8-4.5z" fill="#0d3f86" opacity=".75"/></svg>
<!-- IE -->
<svg class="abs" style="left:297px;top:4px" width="20" height="20" viewBox="0 0 20 20"><text x="10.5" y="17" font-size="20" font-weight="bold" fill="#36b6f0" text-anchor="middle" font-family="Liberation Sans, sans-serif">e</text><path d="M2 15c-2-5 6-13 15-12" fill="none" stroke="#f2c230" stroke-width="1.6"/></svg>
<!-- explorer -->
<svg class="abs" style="left:330px;top:6px" width="18" height="16" viewBox="0 0 18 16"><path d="M1 2h6l1.5 1.5H17V14H1z" fill="#f3c64b"/><path d="M1 6h16v8H1z" fill="#f7d978"/><path d="M5 10h8v4H5z" fill="#4a9be0"/></svg>
<!-- chrome -->
<svg class="abs" style="left:363px;top:5px" width="19" height="19" viewBox="0 0 19 19"><circle cx="9" cy="9" r="8.3" fill="#e04a3a"/><path d="M9 9L1.8 4.8A8.3 8.3 0 0 0 9 17.3z" fill="#34a353"/><path d="M9 9v8.3A8.3 8.3 0 0 0 16.2 4.8z" fill="#f5c127"/><circle cx="9" cy="9" r="3.8" fill="#fff"/><circle cx="9" cy="9" r="3" fill="#4a8af0"/><circle cx="13.5" cy="13.5" r="4.5" fill="#3d7be0" stroke="#e8eefc" stroke-width="1"/><circle cx="13.5" cy="12.5" r="1.5" fill="#dfe9ff"/><path d="M10.8 16a2.8 2.8 0 0 1 5.4 0z" fill="#dfe9ff"/></svg>
<!-- C icon -->
<svg class="abs" style="left:396px;top:5px" width="18" height="18" viewBox="0 0 18 18"><circle cx="9" cy="9" r="8.3" fill="#f3e4c8"/><path d="M14.5 4.5a6.5 6.5 0 1 0 0 9l-2.5-2a3.4 3.4 0 1 1 0-5z" fill="#a8232a"/><circle cx="12" cy="9" r="2.7" fill="#7c1a20"/></svg>
<!-- yandex active -->
<div class="abs" style="left:421px;top:1px;width:32px;height:27px;background:#44525f"></div>
<svg class="abs" style="left:428.5px;top:5px" width="18" height="18" viewBox="0 0 18 18"><circle cx="9" cy="9" r="8.3" fill="#fff"/><path d="M5.2 4.5L9 9.5v5.3M12.8 4.5L9 9.5" fill="none" stroke="#e8352b" stroke-width="2.2" stroke-linecap="round"/></svg>
<!-- blue -->
<svg class="abs" style="left:461px;top:5px" width="18" height="18" viewBox="0 0 18 18"><circle cx="9" cy="9.5" r="7.8" fill="#1f62c8"/><path d="M3 5l4-3.5 1 3 4-3 .5 3.5 3.5-1-1.5 4z" fill="#2b7be6"/><circle cx="9" cy="10" r="3.8" fill="#e8f1ff"/><path d="M6.5 10.5a2.5 2.5 0 0 1 5 0z" fill="#9cc0f5"/></svg>
<!-- scanner -->
<svg class="abs" style="left:494px;top:5px" width="16" height="18" viewBox="0 0 16 18"><path d="M3 1.5h10l1 6H2z" fill="#e9eef3"/><path d="M4 2.5l8 4M12 2.5l-8 4" stroke="#9aa7b5" stroke-width="1"/><rect x="1" y="7.5" width="14" height="9" rx="1" fill="#c8d3df"/><rect x="2.5" y="12" width="11" height="3" fill="#8fb8e8"/><rect x="1" y="7.5" width="14" height="2.2" fill="#eef2f6"/></svg>
<!-- C circle -->
<svg class="abs" style="left:526px;top:5px" width="18" height="18" viewBox="0 0 18 18"><circle cx="9" cy="9" r="8.3" fill="#fff"/><path d="M14 5a6 6 0 1 0 0 8" fill="none" stroke="#1f3f7a" stroke-width="2.2"/><circle cx="10.5" cy="9" r="2.6" fill="#d8343a"/></svg>
<!-- paint -->
<svg class="abs" style="left:558px;top:4px" width="20" height="20" viewBox="0 0 20 20"><ellipse cx="9" cy="12" rx="8" ry="6.2" fill="#d9dde6"/><circle cx="5" cy="10.5" r="1.5" fill="#e0483a"/><circle cx="8" cy="8.5" r="1.5" fill="#f2c22e"/><circle cx="5.5" cy="14" r="1.5" fill="#3fa55a"/><circle cx="12" cy="14.5" r="1.8" fill="#1b2b3a"/><path d="M17.5 1.5l1 1-6 8.5-2 .5.5-2z" fill="#c98a3c"/><path d="M10.5 11.5l2-.5-1.5-1.5z" fill="#333"/></svg>
<!-- underlines -->
<div class="abs" style="left:326px;top:26px;width:26px;height:2px;background:#7fb6e6"></div>
<div class="abs" style="left:359px;top:26px;width:26px;height:2px;background:#7fb6e6"></div>
<div class="abs" style="left:421px;top:26px;width:32px;height:2px;background:#8fc1ee"></div>
<div class="abs" style="left:456px;top:26px;width:26px;height:2px;background:#7fb6e6"></div>
<div class="abs" style="left:554px;top:26px;width:27px;height:2px;background:#7fb6e6"></div>
<!-- tray -->
<svg class="abs" style="left:1132px;top:11px" width="10" height="7" viewBox="0 0 10 7"><path d="M1 5.5l4-4 4 4" fill="none" stroke="#fff" stroke-width="1.1"/></svg>
<svg class="abs" style="left:1146px;top:8px" width="13" height="13" viewBox="0 0 13 13"><rect x="3.5" y="1.5" width="8.5" height="6.5" fill="none" stroke="#fff" stroke-width="1"/><path d="M5 11.5h6M8 8v3.5" stroke="#fff" stroke-width="1"/><rect x="0.5" y="3" width="3" height="4" fill="#1b2b3a" stroke="#fff" stroke-width=".9"/><path d="M2 7v4.5h3" fill="none" stroke="#fff" stroke-width=".9"/></svg>
<svg class="abs" style="left:1162px;top:8px" width="13" height="13" viewBox="0 0 13 13"><path d="M1 4.8h2L5.8 2v9L3 8.2H1z" fill="none" stroke="#fff" stroke-width="1"/><path d="M7.5 4.5a3 3 0 0 1 0 4M9.3 3a5 5 0 0 1 0 7M11 1.8a7 7 0 0 1 0 9.4" fill="none" stroke="#fff" stroke-width=".9"/></svg>
<div class="abs" style="left:1181.6px;top:8px;font-size:8.6px;line-height:12px;color:#fff;white-space:nowrap;letter-spacing:-0.8px">РУС</div>
<div class="abs" style="left:1202px;top:1.5px;width:41px;text-align:center;font-size:8.6px;line-height:12px;color:#fff;white-space:nowrap;letter-spacing:-0.55px">9:46</div>
<div class="abs" style="left:1202px;top:13.3px;width:41px;text-align:center;font-size:8.6px;line-height:12px;color:#fff;white-space:nowrap;letter-spacing:-0.55px">09.10.2025</div>
<svg class="abs" style="left:1251px;top:6px" width="18" height="18" viewBox="0 0 18 18"><path d="M1.5 1.5h11v8h-7l-2.5 2.5v-2.5h-1.5z" fill="#fff"/><path d="M3.5 3.8h7M3.5 5.8h7M3.5 7.8h4.5" stroke="#1b2b3a" stroke-width=".9"/><circle cx="12" cy="12" r="4.3" fill="#1b2b3a" stroke="#b9c0c8" stroke-width=".9"/><text x="12" y="14.8" font-size="7.5" font-weight="bold" fill="#fff" text-anchor="middle" font-family="Liberation Sans, sans-serif">1</text></svg>
<div class="abs" style="left:1276px;top:0;width:1px;height:28px;background:#5a6678"></div>
</div>
</div>

<div id="topshadow" style="position:absolute;left:32px;top:50px;width:1248px;height:2px;background:linear-gradient(180deg,rgba(0,0,0,.09),rgba(0,0,0,0))"></div>
</body>
</html>
